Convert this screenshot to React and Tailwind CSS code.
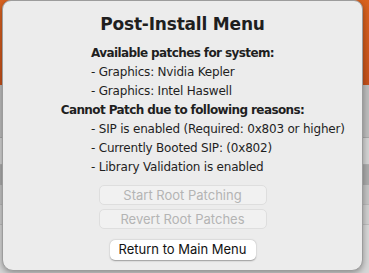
import React from 'react';

const body = { fontFamily: '"DejaVu Sans", "Liberation Sans", sans-serif' };
const sys = { fontFamily: 'Inter, "Liberation Sans", sans-serif' };

export default function App() {
  return (
    <div className="relative w-[369px] h-[273px] overflow-hidden bg-[#c9c9c9]">
      {/* window behind the sheet */}
      <div className="flex flex-col h-full">
        <div className="h-[85px] bg-gradient-to-b from-[#d9621f] to-[#c4501a]" />
        <div className="h-[53px] bg-[#bdbdbd] border-b border-[#a9a9a9]" />
        <div className="h-[27px] bg-[#d2d2d2] border-b border-[#b0b0b0]" />
        <div className="h-[20px] bg-[#ababab]" />
        <div className="h-[20px] bg-[#c4c4c4] border-b border-[#b9b9b9]" />
        <div className="h-[20px] bg-[#cfcfcf] border-b border-[#bdbdbd]" />
        <div className="flex-1 bg-[#d6d6d6]" />
      </div>

      {/* sheet */}
      <div className="absolute left-[2px] top-0 w-[361px] h-[271px] rounded-b-[11px] rounded-t-[9px] bg-[#ececec] border border-[#9c9c9c] shadow-[0_2px_6px_rgba(0,0,0,0.35)] flex flex-col items-center text-[#1f1f1f]" style={body}>
        <div className="mt-[11px] text-[17px] tracking-[-0.2px] font-bold leading-[24px]">Post-Install Menu</div>

        <div className="mt-[8px] w-full flex flex-col text-[12px] leading-[19px] tracking-[-0.2px]">
          <div className="text-center font-bold tracking-[-0.6px]">Available patches for system:</div>
          <div className="pl-[88px]">- Graphics: Nvidia Kepler</div>
          <div className="pl-[88px]">- Graphics: Intel Haswell</div>
          <div className="text-center font-bold tracking-[-0.6px]">Cannot Patch due to following reasons:</div>
          <div className="pl-[88px]">- SIP is enabled (Required: 0x803 or higher)</div>
          <div className="pl-[88px]">- Currently Booted SIP: (0x802)</div>
          <div className="pl-[88px]">- Library Validation is enabled</div>
        </div>

        <div className="mt-[8px] flex flex-col items-center gap-[4px]" style={sys}>
          <button className="w-[168px] h-[20px] rounded-[5px] bg-[#f1f1f1] border border-[#dedede] text-[13px] text-[#b4b4b4]">Start Root Patching</button>
          <button className="w-[168px] h-[20px] rounded-[5px] bg-[#f1f1f1] border border-[#dedede] text-[13px] text-[#b4b4b4]">Revert Root Patches</button>
          <button className="mt-[7px] w-[146px] h-[20px] rounded-[5px] bg-white text-[13px] text-[#111] shadow-[0_0.5px_1.5px_rgba(0,0,0,0.35)]">Return to Main Menu</button>
        </div>
      </div>
    </div>
  );
}
